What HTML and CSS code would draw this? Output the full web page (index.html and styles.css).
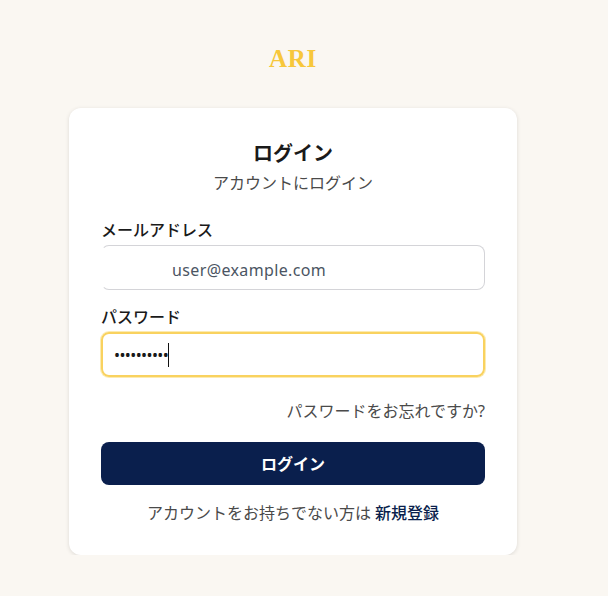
FILE: index.html
```html
<!DOCTYPE html>
<html lang="ja">
<head>
    <meta charset="UTF-8" />
    <meta name="viewport" content="width=device-width, initial-scale=1.0" />
    <title>ARI - ログイン</title>
    <link rel="stylesheet" href="styles.css">
</head>
<body>
<main class="page">
    <div class="logo">ARI</div>
    <section class="card">
        <div class="header">
            <h1>ログイン</h1>
            <p>アカウントにログイン</p>
        </div>
        <form class="form">
            <div class="field">
                <label>メールアドレス</label>
                <div class="input input-email">user@example.com</div>
            </div>
            <div class="field">
                <label>パスワード</label>
                <div class="input input-focus"><span class="dots">••••••••••</span><span class="caret"></span></div>
            </div>
            <a class="forgot" href="#">パスワードをお忘れですか?</a>
            <button type="button" class="submit">ログイン</button>
        </form>
        <p class="signup">アカウントをお持ちでない方は <a href="#">新規登録</a></p>
    </section>
</main>
</body>
</html>
```

FILE: styles.css
```css
* {
    box-sizing: border-box;
}
body {
    font-family: "Noto Sans", "Noto Sans CJK JP", sans-serif;
    margin: 0;
    background-color: #FAF7F2;
    color: #1a1a1a;
}
.page {
    display: flex;
    flex-direction: column;
    align-items: center;
    padding-top: 43px;
    padding-right: 22px;
}
.logo {
    font-family: "Liberation Serif", serif;
    font-weight: bold;
    font-size: 25px;
    line-height: 32px;
    letter-spacing: 0.7px;
    color: #F7C73B;
    margin-bottom: 33px;
}
.card {
    width: 448px;
    height: 447px;
    background-color: #fff;
    border-radius: 12px;
    box-shadow: 0 1px 4px rgba(0, 0, 0, 0.12);
    padding: 32px;
}
.header {
    text-align: center;
    margin-bottom: 25px;
}
.header h1 {
    font-size: 20px;
    line-height: 28px;
    margin: 0 0 3px;
    font-weight: bold;
}
.header p {
    font-size: 16px;
    line-height: 24px;
    color: #4a4a4a;
    margin: 0;
}
.form {
    display: flex;
    flex-direction: column;
}
.field {
    margin-bottom: 17px;
}
.field label {
    display: block;
    font-size: 16px;
    line-height: 20px;
    font-weight: 500;
    margin-bottom: 5px;
}
.input {
    height: 45px;
    border: 1px solid #d4d4d8;
    border-radius: 8px;
    display: flex;
    align-items: center;
    font-size: 16px;
    color: #4b5563;
}
.input-email {
    border-left-color: #fff;
    padding-left: 70px;
    padding-top: 5px;
    letter-spacing: 0.37px;
}
.input-focus {
    border: 2px solid #F9D25F;
    box-shadow: 0 0 0 1px rgba(249, 210, 85, 0.45);
    padding-left: 11px;
    color: #1a1a1a;
}
.dots {
    letter-spacing: -0.6px;
}
.caret {
    width: 1px;
    height: 24px;
    background-color: #111;
}
.forgot {
    align-self: flex-end;
    font-size: 16px;
    line-height: 24px;
    color: #4a4a4a;
    text-decoration: none;
    margin-top: 5px;
}
.submit {
    height: 43px;
    margin-top: 19px;
    padding-bottom: 3px;
    border: none;
    border-radius: 8px;
    background-color: #0A1F4D;
    color: #fff;
    font-family: inherit;
    font-size: 16px;
    font-weight: bold;
}
.signup {
    text-align: center;
    font-size: 16px;
    line-height: 24px;
    color: #4a4a4a;
    margin: 16px 0 0;
}
.signup a {
    color: #0A1F4D;
    font-weight: 500;
    text-decoration: none;
}
```
